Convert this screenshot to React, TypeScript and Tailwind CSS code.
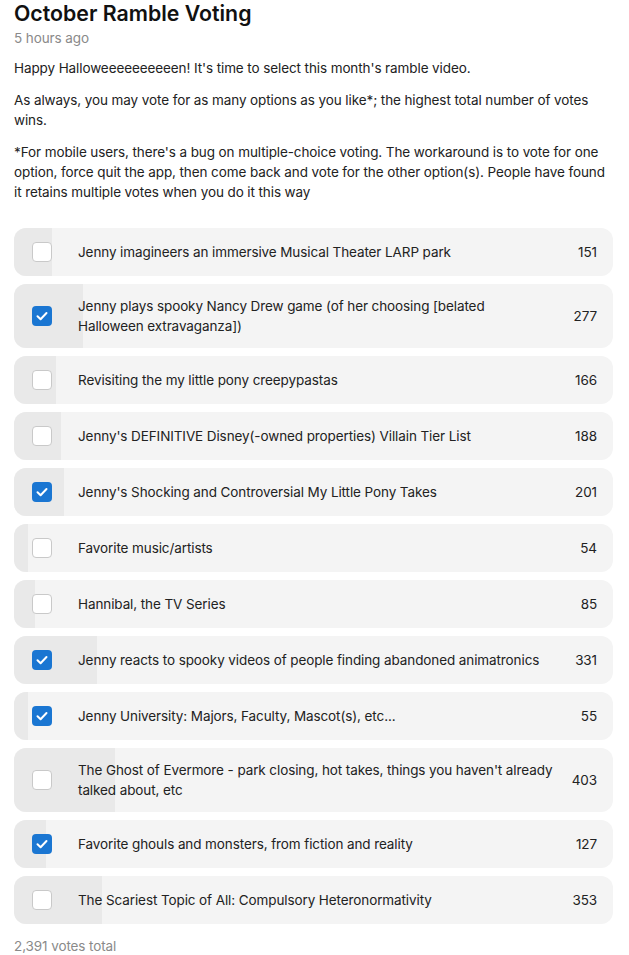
import React from "react";

type Opt = { label: React.ReactNode; count: number; checked: boolean };

const options: Opt[] = [
  { label: "Jenny imagineers an immersive Musical Theater LARP park", count: 151, checked: false },
  {
    label: (
      <>
        Jenny plays spooky Nancy Drew game (of her choosing [belated
        <br />
        Halloween extravaganza])
      </>
    ),
    count: 277,
    checked: true,
  },
  { label: "Revisiting the my little pony creepypastas", count: 166, checked: false },
  { label: "Jenny's DEFINITIVE Disney(-owned properties) Villain Tier List", count: 188, checked: false },
  { label: "Jenny's Shocking and Controversial My Little Pony Takes", count: 201, checked: true },
  { label: "Favorite music/artists", count: 54, checked: false },
  { label: "Hannibal, the TV Series", count: 85, checked: false },
  { label: "Jenny reacts to spooky videos of people finding abandoned animatronics", count: 331, checked: true },
  { label: "Jenny University: Majors, Faculty, Mascot(s), etc...", count: 55, checked: true },
  { label: "The Ghost of Evermore - park closing, hot takes, things you haven't already talked about, etc", count: 403, checked: false },
  { label: "Favorite ghouls and monsters, from fiction and reality", count: 127, checked: true },
  { label: "The Scariest Topic of All: Compulsory Heteronormativity", count: 353, checked: false },
];

const total = 2391;

function Checkbox({ checked }: { checked: boolean }) {
  if (checked) {
    return (
      <div className="w-5 h-5 rounded-[4px] bg-[#1a76d2] flex items-center justify-center shrink-0">
        <svg width="14" height="14" viewBox="0 0 14 14" fill="none">
          <path d="M2.5 7.2 L5.6 10.2 L11.5 4" stroke="white" strokeWidth="2" strokeLinecap="round" strokeLinejoin="round" />
        </svg>
      </div>
    );
  }
  return <div className="w-5 h-5 rounded-[4px] bg-white border border-[#c9c9c9] shrink-0" />;
}

export default function App() {
  return (
    <div
      className="bg-white text-[#222222] px-[14px] pb-4"
      style={{ fontFamily: "Inter, 'Noto Sans', sans-serif" }}
    >
      <h1 className="text-[21.3px] leading-[26px] font-semibold text-[#111111]">October Ramble Voting</h1>
      <div className="text-[13.5px] tracking-[-0.1px] leading-5 text-[#8a8a8a] mt-[2px]">5 hours ago</div>
      <div className="text-[13.5px] tracking-[-0.1px] leading-5 mt-[10px] flex flex-col gap-3">
        <p>Happy Halloweeeeeeeeeen! It's time to select this month's ramble video.</p>
        <p>As always, you may vote for as many options as you like*; the highest total number of votes wins.</p>
        <p>
          *For mobile users, there's a bug on multiple-choice voting. The workaround is to vote for one option, force quit the app, then come back and vote for the other option(s). People have found it retains multiple votes when you do it this way
        </p>
      </div>
      <div className="mt-[26px] flex flex-col gap-2 w-[599px]">
        {options.map((o, i) => (
          <div key={i} className="relative rounded-xl bg-[#f4f4f4] overflow-hidden">
            <div
              className="absolute left-0 top-0 bottom-0 bg-[#e9e9e9]"
              style={{ width: `${(o.count / total) * 100}%` }}
            />
            <div className="relative flex items-center min-h-[48px] py-3 pl-[18px] pr-4 text-[13.5px] tracking-[-0.1px] leading-5">
              <Checkbox checked={o.checked} />
              <div className="ml-[26px] flex-1 pr-4">{o.label}</div>
              <div className="shrink-0 text-right">{o.count}</div>
            </div>
          </div>
        ))}
      </div>
      <div className="mt-3 text-[13.5px] tracking-[-0.1px] leading-5 text-[#8a8a8a]">2,391 votes total</div>
    </div>
  );
}
